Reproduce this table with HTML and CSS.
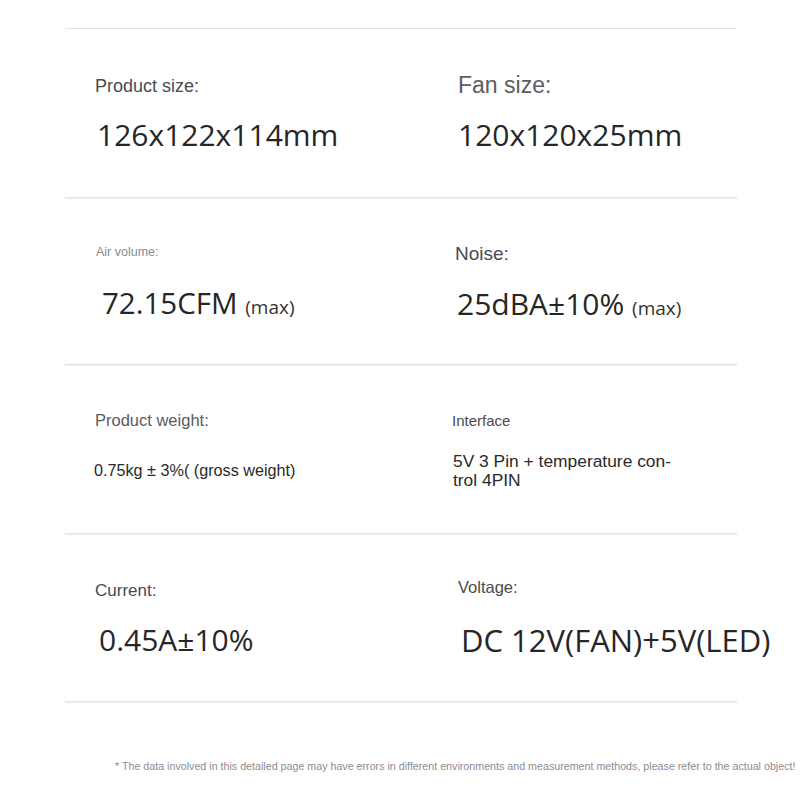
FILE: index.html
```html
<!DOCTYPE html>
<html lang="en">
<head>
<meta charset="utf-8">
<title>Specifications</title>
<link rel="stylesheet" href="styles.css">
</head>
<body>
<main class="sheet">
  <section class="row row-1">
    <div class="cell cell-left c1l">
      <div class="label">Product size:</div>
      <div class="value">126x122x114mm</div>
    </div>
    <div class="cell cell-right c1r">
      <div class="label">Fan size:</div>
      <div class="value">120x120x25mm</div>
    </div>
  </section>
  <section class="row row-2">
    <div class="cell cell-left c2l">
      <div class="label">Air volume:</div>
      <div class="value">72.15CFM <span class="unit">(max)</span></div>
    </div>
    <div class="cell cell-right c2r">
      <div class="label">Noise:</div>
      <div class="value">25dBA±10% <span class="unit">(max)</span></div>
    </div>
  </section>
  <section class="row row-3">
    <div class="cell cell-left c3l">
      <div class="label">Product weight:</div>
      <div class="value">0.75kg ± 3%( (gross weight)</div>
    </div>
    <div class="cell cell-right c3r">
      <div class="label">Interface</div>
      <div class="value">5V 3 Pin + temperature con-<br>trol 4PIN</div>
    </div>
  </section>
  <section class="row row-4">
    <div class="cell cell-left c4l">
      <div class="label">Current:</div>
      <div class="value">0.45A±10%</div>
    </div>
    <div class="cell cell-right c4r">
      <div class="label">Voltage:</div>
      <div class="value">DC 12V(FAN)+5V(LED)</div>
    </div>
  </section>
</main>
<p class="note">* The data involved in this detailed page may have errors in different environments and measurement methods, please refer to the actual object!</p>
</body>
</html>
```

FILE: styles.css
```css
html, body {
  margin: 0;
  padding: 0;
  background: #ffffff;
}

body {
  font-family: "Liberation Sans", Arial, sans-serif;
  color: #333;
  width: 800px;
  overflow: hidden;
}

.sheet {
  margin: 0 0 0 65px;
  padding-top: 28px;
  width: 672px;
}

.row {
  display: grid;
  grid-template-columns: 390px 282px;
  height: 168px;
  box-sizing: border-box;
  border-bottom: 1px solid #e1e1ed;
  box-shadow: 0 1px 1px #efeff7;
}

.row-1 {
  border-top: 1px solid #e1e1ed;
  height: 170px;
}

.row-2 { height: 167px; }
.row-3 { height: 169px; }
.row-4 { height: 168px; }

.cell {
  display: flex;
  flex-direction: column;
  align-items: flex-start;
}

.cell-left {
  padding-left: 30px;
}

.label {
  font-family: "Liberation Sans", Arial, sans-serif;
  line-height: 1;
  color: #4a4a50;
  white-space: nowrap;
}

.value {
  font-family: "Open Sans", "Noto Sans", sans-serif;
  line-height: 1;
  color: #262626;
  white-space: nowrap;
}

.unit {
  font-size: 19px;
  color: #333;
}

/* Row 1 */
.c1l { padding-top: 48px; }
.c1l .label { font-size: 18px; }
.c1l .value { font-size: 30px; margin: 25px 0 0 2px; }

.c1r { padding-top: 45px; }
.c1r .label { font-size: 23px; color: #5c5c62; margin-left: 3px; }
.c1r .value { font-size: 30px; margin: 23px 0 0 3px; }

/* Row 2 */
.c2l { padding-top: 48px; }
.c2l .label { font-size: 12.5px; color: #8a8a8f; margin-left: 1px; }
.c2l .value { font-size: 29.5px; margin: 29px 0 0 7px; }

.c2r { padding-top: 46px; }
.c2r .label { font-size: 19px; }
.c2r .value { font-size: 30px; margin: 26px 0 0 2px; }

/* Row 3 */
.c3l { padding-top: 47px; }
.c3l .label { font-size: 16.5px; color: #5a5a60; }
.c3l .value { font-family: "Liberation Sans", Arial, sans-serif; font-size: 16.2px; color: #2a2a2a; margin: 33px 0 0 -1px; }

.c3r { padding-top: 48px; }
.c3r .label { font-size: 15px; margin-left: -3px; }
.c3r .value { font-family: "Liberation Sans", Arial, sans-serif; font-size: 17.4px; line-height: 19px; color: #2a2a2a; margin: 24px 0 0 -2px; }

/* Row 4 */
.c4l { padding-top: 48px; }
.c4l .label { font-size: 17px; }
.c4l .value { font-size: 30px; margin: 26px 0 0 4px; }

.c4r { padding-top: 45px; }
.c4r .label { font-size: 16.5px; margin-left: 3px; }
.c4r .value { font-size: 31px; margin: 29px 0 0 6px; }

.note {
  margin: 59px 0 0 115px;
  font-size: 10.7px;
  line-height: 1;
  color: #8c8c92;
  white-space: nowrap;
}
```
